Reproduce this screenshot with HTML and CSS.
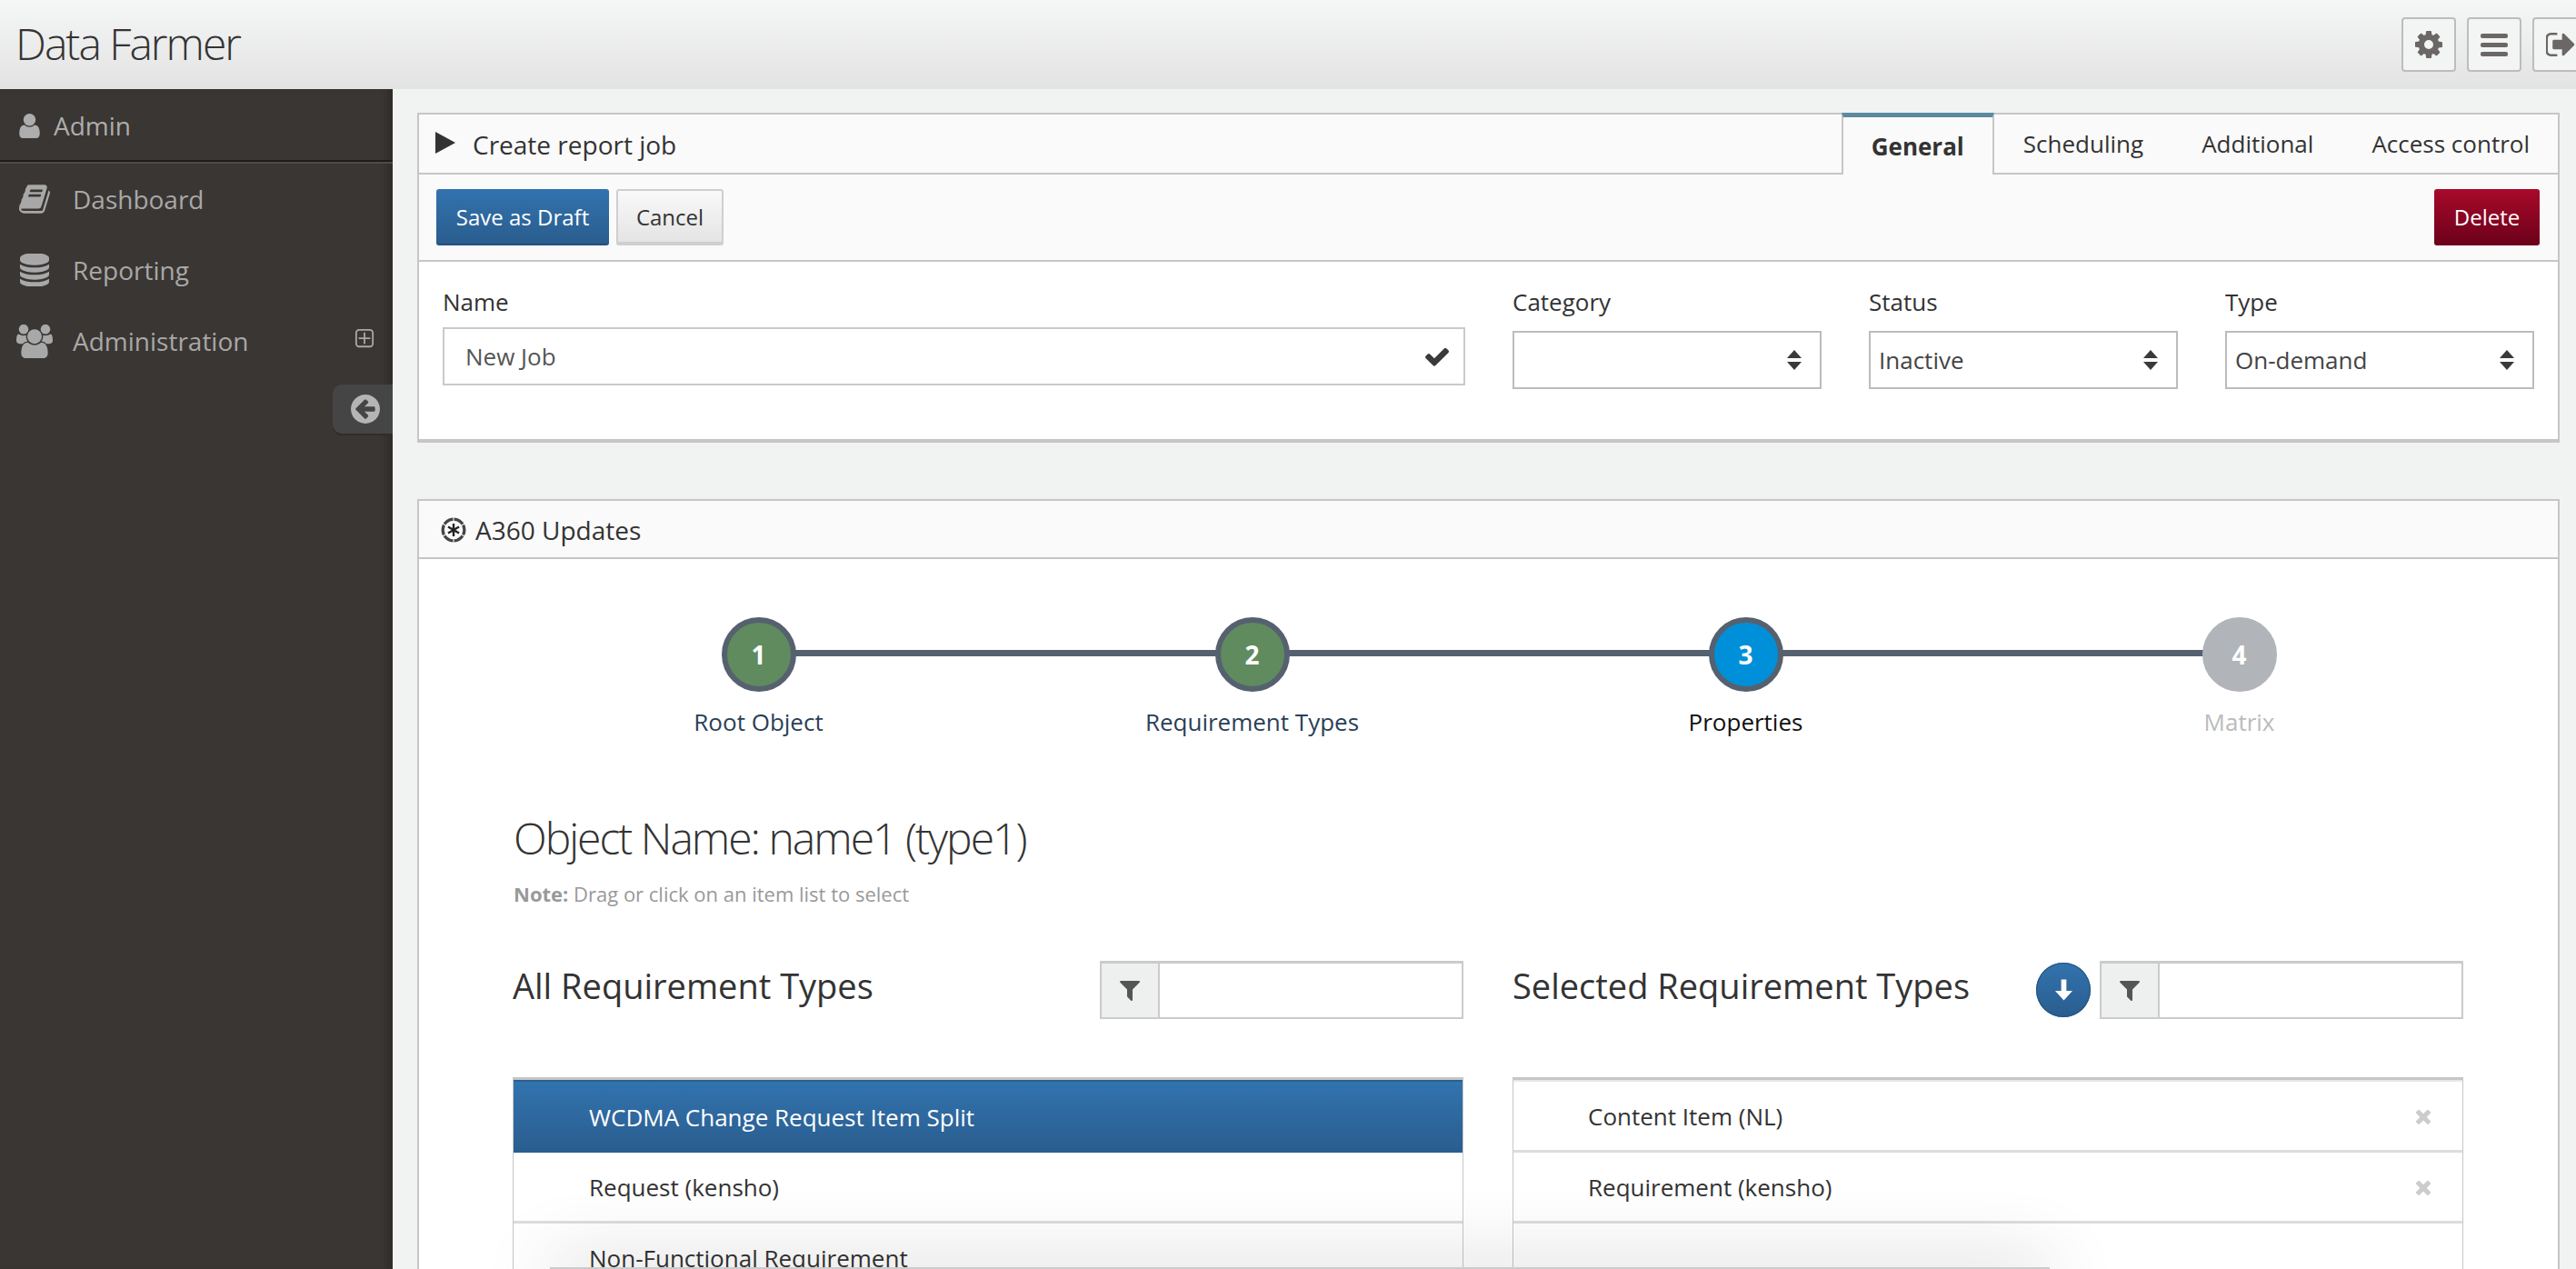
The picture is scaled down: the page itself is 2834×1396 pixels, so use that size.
FILE: index.html
```html
<!DOCTYPE html>
<html lang="en">
<head>
  <meta charset="UTF-8" />
  <title>Data Farmer</title>
  <link rel="stylesheet" href="styles.css">
</head>
<body>

  <svg class="sprite" xmlns="http://www.w3.org/2000/svg">
    <symbol id="i-user" viewBox="192 128 1408 1536"><path d="M1536 1399q0 109-62.500 187t-150.500 78h-854q-88 0-150.500-78t-62.500-187q0-85 8.500-160.500t31.500-152 58.500-131 94-89 134.500-34.500q131 128 313 128t313-128q76 0 134.500 34.500t94 89 58.500 131 31.500 152 8.500 160.500zm-256-887q0 159-112.500 271.500t-271.500 112.500-271.500-112.500-112.500-271.500 112.500-271.500 271.500-112.500 271.500 112.500 112.500 271.500z"/></symbol>
    <symbol id="i-book" viewBox="64 128 1664 1536"><path d="M1703 478q40 57 18 129l-275 906q-19 64-76.500 107.500t-122.500 43.500h-923q-77 0-148.500-53.500t-99.500-131.500q-24-67-2-127 0-4 3-27t4-37q1-8-3-21.500t-3-19.500q2-11 8-21t16.500-23.500 16.500-23.500q23-38 45-91.500t30-91.500q3-10 .5-30t-.5-28q3-11 17-28t17-23q21-36 42-92t25-90q1-9-2.500-32t.5-28q4-13 22-30.500t22-22.500q19-26 42.500-84.500t27.500-96.500q1-8-3-25.500t-2-26.500q2-8 9-18t18-23 17-21q8-12 16.500-30.500t15-35 16-36 19.500-32 26.500-23.500 36-11.500 47.500 5.500l-1 3q38-9 51-9h761q74 0 114 56t18 130l-274 906q-36 119-71.500 153.500t-128.500 34.500h-869q-27 0-38 15-11 16-1 43 24 70 144 70h923q29 0 56-15.500t35-41.500l300-987q7-22 5-57 38 15 59 43zm-1064 2q-4 13 2 22.500t20 9.500h608q13 0 25.500-9.500t16.500-22.500l21-64q4-13-2-22.500t-20-9.500h-608q-13 0-25.500 9.500t-16.500 22.500zm-83 256q-4 13 2 22.500t20 9.500h608q13 0 25.500-9.500t16.500-22.500l21-64q4-13-2-22.500t-20-9.500h-608q-13 0-25.500 9.500t-16.500 22.500z"/></symbol>
    <symbol id="i-database" viewBox="128 128 1536 1536"><path d="M896 768q237 0 443-43t325-127v170q0 69-103 128t-280 93.500-385 34.500-385-34.500-280-93.500-103-128v-170q119 84 325 127t443 43zm0 768q237 0 443-43t325-127v170q0 69-103 128t-280 93.500-385 34.500-385-34.500-280-93.500-103-128v-170q119 84 325 127t443 43zm0-384q237 0 443-43t325-127v170q0 69-103 128t-280 93.500-385 34.500-385-34.500-280-93.500-103-128v-170q119 84 325 127t443 43zm0-1152q208 0 385 34.500t280 93.500 103 128v128q0 69-103 128t-280 93.500-385 34.500-385-34.500-280-93.500-103-128v-128q0-69 103-128t280-93.500 385-34.500z"/></symbol>
    <symbol id="i-users" viewBox="0 128 1920 1536"><path d="M593 896q-162 5-265 128h-134q-82 0-138-40.500t-56-118.500q0-353 124-353 6 0 43.500 21t97.500 42.500 119 21.500q67 0 133-23-5 37-5 66 0 139 81 256zm1071 637q0 120-73 189.500t-194 69.500h-874q-121 0-194-69.500t-73-189.500q0-53 3.500-103.500t14-109 26.500-108.500 43-97.500 62-81 85.500-53.500 111.500-20q10 0 43 21.500t73 48 107 48 135 21.500 135-21.500 107-48 73-48 43-21.500q61 0 111.500 20t85.500 53.500 62 81 43 97.500 26.500 108.500 14 109 3.500 103.500zm-1024-1277q0 106-75 181t-181 75-181-75-75-181 75-181 181-75 181 75 75 181zm704 384q0 159-112.500 271.500t-271.500 112.500-271.500-112.500-112.500-271.500 112.500-271.500 271.500-112.500 271.500 112.500 112.500 271.500zm576 225q0 78-56 118.500t-138 40.500h-134q-103-123-265-128 81-117 81-256 0-29-5-66 66 23 133 23 59 0 119-21.500t97.500-42.500 43.500-21q124 0 124 353zm-128-609q0 106-75 181t-181 75-181-75-75-181 75-181 181-75 181 75 75 181z"/></symbol>
    <symbol id="i-plus-square" viewBox="192 128 1408 1536"><path d="M1344 800v64q0 14-9 23t-23 9h-352v352q0 14-9 23t-23 9h-64q-14 0-23-9t-9-23v-352h-352q-14 0-23-9t-9-23v-64q0-14 9-23t23-9h352v-352q0-14 9-23t23-9h64q14 0 23 9t9 23v352h352q14 0 23 9t9 23zm128 448v-832q0-66-47-113t-113-47h-832q-66 0-113 47t-47 113v832q0 66 47 113t113 47h832q66 0 113-47t47-113zm128-832v832q0 119-84.500 203.500t-203.500 84.500h-832q-119 0-203.500-84.500t-84.500-203.500v-832q0-119 84.500-203.500t203.500-84.500h832q119 0 203.500 84.500t84.500 203.500z"/></symbol>
    <symbol id="i-arrow-circle" viewBox="128 128 1536 1536"><path d="M1408 960v-128q0-26-19-45t-45-19h-502l189-189q19-19 19-45t-19-45l-91-91q-18-18-45-18t-45 18l-362 362-91 91q-18 18-18 45t18 45l91 91 362 362q18 18 45 18t45-18l91-91q18-18 18-45t-18-45l-189-189h502q26 0 45-19t19-45zm256-64q0 209-103 385.500t-279.500 279.500-385.500 103-385.500-103-279.500-279.500-103-385.500 103-385.500 279.500-279.500 385.500-103 385.500 103 279.500 279.500 103 385.500z"/></symbol>
    <symbol id="i-cog" viewBox="128 128 1536 1536"><path d="M1152 896q0-106-75-181t-181-75-181 75-75 181 75 181 181 75 181-75 75-181zm512-109v222q0 12-8 23t-20 13l-185 28q-19 54-39 91 35 50 107 138 10 12 10 25t-9 23q-27 37-99 108t-94 71q-12 0-26-9l-138-108q-44 23-91 38-16 136-29 186-7 28-36 28h-222q-14 0-24.500-8.500t-11.500-21.500l-28-184q-49-16-90-37l-141 107q-10 9-25 9-14 0-25-11-126-114-165-168-7-10-7-23 0-12 8-23 15-21 51-66.500t54-70.500q-27-50-41-99l-183-27q-13-2-21-12.500t-8-23.500v-222q0-12 8-23t19-13l186-28q14-46 39-92-40-57-107-138-10-12-10-24 0-10 9-23 26-36 98.500-107.500t94.500-71.500q13 0 26 10l138 107q44-23 91-38 16-136 29-186 7-28 36-28h222q14 0 24.500 8.500t11.500 21.500l28 184q49 16 90 37l142-107q9-9 24-9 13 0 25 10 129 119 165 170 7 8 7 22 0 12-8 23-15 21-51 66.500t-54 70.500q26 50 41 98l183 28q13 2 21 12.500t8 23.500z"/></symbol>
    <symbol id="i-sign-out" viewBox="128 256 1504 1280"><path d="M704 1440q0 4 1 20t.5 26.500-3 23.500-10 19.500-20.500 6.500h-320q-119 0-203.500-84.500t-84.500-203.500v-704q0-119 84.500-203.500t203.500-84.500h320q13 0 22.500 9.500t9.500 22.500q0 4 1 20t.5 26.500-3 23.500-10 19.500-20.500 6.500h-320q-66 0-113 47t-47 113v704q0 66 47 113t113 47h312l11.500 1 11.500 3 8 5.500 7 9 2 13.500zm928-544q0 26-19 45l-544 544q-19 19-45 19t-45-19-19-45v-288h-448q-26 0-45-19t-19-45v-384q0-26 19-45t45-19h448v-288q0-26 19-45t45-19 45 19l544 544q19 19 19 45z"/></symbol>
    <symbol id="i-check" viewBox="121 274 1550 1210"><path d="M1671 566q0 40-28 68l-724 724-136 136q-28 28-68 28t-68-28l-136-136-362-362q-28-28-28-68t28-68l136-136q28-28 68-28t68 28l294 295 656-657q28-28 68-28t68 28l136 136q28 28 28 68z"/></symbol>
    <symbol id="i-filter" viewBox="190 256 1410 1408"><path d="M1595 295q17 41-14 70l-493 493v742q0 42-39 59-13 5-25 5-27 0-45-19l-256-256q-19-19-19-45v-486l-493-493q-31-29-14-70 17-39 59-39h1280q42 0 59 39z"/></symbol>
    <symbol id="i-times" viewBox="300 238 1190 1316"><path d="M1490 1322q0 40-28 68l-136 136q-28 28-68 28t-68-28l-294-294-294 294q-28 28-68 28t-68-28l-136-136q-28-28-28-68t28-68l294-294-294-294q-28-28-28-68t28-68l136-136q28-28 68-28t68 28l294 294 294-294q28-28 68-28t68 28l136 136q28 28 28 68t-28 68l-294 294 294 294q28 28 28 68z"/></symbol>
    <symbol id="i-updown" viewBox="0 0 16 22"><path d="M8 0l8 9H0zM8 22L0 13h16z"/></symbol>
  </svg>

  <header class="topbar">
    <div class="brand">Data Farmer</div>
    <div class="top-actions">
      <button class="top-btn"><svg class="top-icon"><use href="#i-cog"/></svg></button>
      <button class="top-btn">
        <span class="bars"><span></span><span></span><span></span></span>
      </button>
      <button class="top-btn"><svg class="top-icon signout-icon"><use href="#i-sign-out"/></svg></button>
    </div>
  </header>

  <div class="layout">
    <aside class="sidebar">
      <div class="user-row">
        <svg class="user-icon"><use href="#i-user"/></svg>
        <span>Admin</span>
      </div>
      <ul class="menu">
        <li class="menu-item">
          <span class="menu-icon"><svg class="icon-book"><use href="#i-book"/></svg></span>
          <span>Dashboard</span>
        </li>
        <li class="menu-item">
          <span class="menu-icon"><svg class="icon-db"><use href="#i-database"/></svg></span>
          <span>Reporting</span>
        </li>
        <li class="menu-item">
          <span class="menu-icon"><svg class="icon-users"><use href="#i-users"/></svg></span>
          <span>Administration</span>
          <svg class="expand-icon"><use href="#i-plus-square"/></svg>
        </li>
      </ul>
      <div class="collapse-tab"><svg><use href="#i-arrow-circle"/></svg></div>
    </aside>

    <main class="content">
      <section class="panel job-panel">
        <div class="panel-head">
          <div class="panel-title">
            <span class="play"></span>
            <span>Create report job</span>
          </div>
          <nav class="tabs">
            <a class="tab active">General</a>
            <a class="tab">Scheduling</a>
            <a class="tab">Additional</a>
            <a class="tab">Access control</a>
          </nav>
        </div>
        <div class="toolbar">
          <button class="btn btn-primary">Save as Draft</button>
          <button class="btn btn-default">Cancel</button>
          <button class="btn btn-danger">Delete</button>
        </div>
        <div class="job-form">
          <div class="field field-name">
            <label>Name</label>
            <div class="name-input">
              <span>New Job</span>
              <svg class="check-icon"><use href="#i-check"/></svg>
            </div>
          </div>
          <div class="field">
            <label class="select-label">Category</label>
            <div class="select"><span></span><svg><use href="#i-updown"/></svg></div>
          </div>
          <div class="field">
            <label class="select-label">Status</label>
            <div class="select"><span>Inactive</span><svg><use href="#i-updown"/></svg></div>
          </div>
          <div class="field">
            <label class="select-label">Type</label>
            <div class="select"><span>On-demand</span><svg><use href="#i-updown"/></svg></div>
          </div>
        </div>
      </section>

      <section class="panel updates-panel">
        <div class="updates-head">
          <svg class="empire-icon" viewBox="0 0 26 26">
            <circle cx="13" cy="13" r="11" fill="none" stroke="#444" stroke-width="3"/>
            <path d="M13 0v5M13 21v5M1.700 6.500l4.300 2.500M20 17l4.300 2.500M1.700 19.500L6 17M20 9l4.300-2.500" stroke="#fafafa" stroke-width="1"/>
            <path d="M13 6.500v13M7.400 9.750l11.200 6.500M7.400 16.250l11.200-6.500" stroke="#222" stroke-width="2.200"/>
          </svg>
          <span>A360 Updates</span>
        </div>
        <div class="updates-body">
          <ol class="stepper">
            <li class="step done"><span class="step-circle">1</span><span class="step-label">Root Object</span></li>
            <li class="step done"><span class="step-circle">2</span><span class="step-label">Requirement Types</span></li>
            <li class="step current"><span class="step-circle">3</span><span class="step-label">Properties</span></li>
            <li class="step pending"><span class="step-circle">4</span><span class="step-label">Matrix</span></li>
          </ol>

          <h2 class="object-name">Object Name: name1 (type1)</h2>
          <p class="note"><strong>Note:</strong> Drag or click on an item list to select</p>

          <div class="columns">
            <div class="column">
              <div class="column-head">
                <h3>All Requirement Types</h3>
                <div class="filter">
                  <span class="filter-addon"><svg><use href="#i-filter"/></svg></span>
                </div>
              </div>
              <ul class="item-list">
                <li class="item selected">WCDMA Change Request Item Split</li>
                <li class="item">Request (kensho)</li>
                <li class="item">Non-Functional Requirement</li>
              </ul>
            </div>
            <div class="column">
              <div class="column-head">
                <h3>Selected Requirement Types</h3>
                <div class="head-tools">
                  <button class="round-btn">
                    <svg viewBox="0 0 20 24"><path d="M7 0h6v13h7L10 24 0 13h7z"/></svg>
                  </button>
                  <div class="filter">
                    <span class="filter-addon"><svg><use href="#i-filter"/></svg></span>
                  </div>
                </div>
              </div>
              <ul class="item-list">
                <li class="item"><span>Content Item (NL)</span><svg class="remove-icon"><use href="#i-times"/></svg></li>
                <li class="item"><span>Requirement (kensho)</span><svg class="remove-icon"><use href="#i-times"/></svg></li>
              </ul>
            </div>
          </div>
        </div>
      </section>
    </main>
  </div>

  <!-- shadow of another window that sits just below the screen -->
  <div class="window-shadow"></div>

</body>
</html>
```

FILE: styles.css
```css
* {
  box-sizing: border-box;
}

html, body {
  height: 100%;
}

body {
  margin: 0;
  font-family: 'Open Sans', sans-serif;
  font-size: 26px;
  color: #333;
  background-color: #f1f2f2;
  display: flex;
  flex-direction: column;
  overflow: hidden;
  position: relative;
}

ul, ol {
  list-style: none;
  margin: 0;
  padding: 0;
}

button {
  font-family: inherit;
  cursor: pointer;
}

svg {
  display: block;
  fill: currentColor;
}

.sprite {
  display: none;
}

/* top bar */
.topbar {
  flex: 0 0 98px;
  display: flex;
  align-items: center;
  justify-content: space-between;
  background: linear-gradient(#f5f6f6, #e3e3e3);
}

.brand {
  padding: 0 0 3px 17px;
  font-size: 48px;
  font-weight: 300;
  letter-spacing: -2px;
  color: #333;
}

.top-actions {
  display: flex;
  gap: 12px;
  margin-right: -12px;
  flex: none;
}

.top-btn {
  width: 60px;
  height: 60px;
  padding: 0;
  display: flex;
  align-items: center;
  justify-content: center;
  background-color: #f3f4f4;
  border: 2px solid #bdbdbd;
  border-radius: 4px;
  color: #6b6766;
}

.top-icon {
  width: 30px;
  height: 30px;
}

.signout-icon {
  width: 32px;
  height: 26px;
  margin-left: 2px;
}

.bars {
  display: flex;
  flex-direction: column;
  gap: 5px;
}

.bars span {
  display: block;
  width: 30px;
  height: 5px;
  border-radius: 2px;
  background-color: #6b6766;
}

.layout {
  flex: 1;
  display: flex;
  min-height: 0;
}

/* sidebar */
.sidebar {
  flex: 0 0 432px;
  display: flex;
  flex-direction: column;
  background-color: #3a3633;
  box-shadow: inset -10px 0 10px -6px rgba(0, 0, 0, 0.25);
  font-size: 28px;
  color: #a8a8a8;
}

.user-row {
  height: 82px;
  flex: none;
  display: flex;
  align-items: center;
  gap: 14px;
  padding: 0 0 0 20px;
  border-bottom: 2px solid #4d4a48;
  box-shadow: inset 0 -2px 0 #1f1d1b;
  color: #adadad;
}

.user-icon {
  width: 25px;
  height: 27px;
}

.menu-item {
  height: 78px;
  display: flex;
  align-items: center;
  padding-right: 20px;
}

.menu-icon {
  width: 80px;
  flex: none;
  display: flex;
  justify-content: center;
  padding-right: 4px;
}

.menu-icon + span {
  flex: 1;
}

.icon-book {
  width: 34px;
  height: 32px;
}

.icon-db {
  width: 32px;
  height: 36px;
}

.icon-users {
  width: 40px;
  height: 37px;
}

.expand-icon {
  width: 22px;
  height: 22px;
  margin-bottom: 4px;
}

.collapse-tab {
  align-self: flex-end;
  width: 66px;
  height: 54px;
  margin-top: 9px;
  display: flex;
  align-items: center;
  padding-left: 20px;
  background-color: #454545;
  border-radius: 10px 0 0 10px;
  box-shadow: 0 2px 0 #2f2c2a;
  color: #b5b5b5;
}

.collapse-tab svg {
  width: 32px;
  height: 32px;
}

/* main column */
.content {
  flex: 1;
  min-width: 0;
  padding: 26px 18px 0 27px;
}

.panel {
  background-color: #fff;
  border: 2px solid #c6c6c6;
}

.job-panel {
  height: 363px;
  border-bottom-width: 4px;
}

.panel-head {
  height: 66px;
  display: flex;
  justify-content: space-between;
  background-color: #fafafa;
  border-bottom: 2px solid #c6c6c6;
}

.panel-title {
  display: flex;
  align-items: center;
  gap: 19px;
  padding: 2px 0 0 18px;
  font-size: 28px;
}

.play {
  width: 0;
  height: 0;
  border-left: 22px solid #333;
  border-top: 12px solid transparent;
  border-bottom: 12px solid transparent;
  margin-bottom: 4px;
}

.tabs {
  display: flex;
}

.tab {
  padding: 0 32px;
  display: flex;
  align-items: center;
  height: 100%;
}

.tab:last-child {
  padding-right: 31px;
}

.tab.active {
  height: 68px;
  margin-top: -2px;
  padding: 0 31px;
  background-color: #fafafa;
  border: 2px solid #c6c6c6;
  border-top: 5px solid #5a8ba0;
  border-bottom: none;
  font-weight: 700;
}

.toolbar {
  height: 96px;
  display: flex;
  align-items: center;
  gap: 8px;
  padding: 0 20px 0 19px;
  background-color: #fafafa;
  border-bottom: 2px solid #c6c6c6;
}

.btn {
  height: 62px;
  padding: 0;
  font-size: 24px;
  white-space: nowrap;
  border-radius: 3px;
  border: none;
}

.btn-primary {
  width: 190px;
  color: #fff;
  font-weight: 500;
  background: linear-gradient(#3273ae, #2a5d8e);
  border-bottom: 2px solid #23527c;
}

.btn-default {
  width: 118px;
  color: #333;
  background: linear-gradient(#f9f9f9, #e4e4e4);
  border: 2px solid #cfcfcf;
  border-bottom-width: 4px;
}

.btn-danger {
  width: 116px;
  margin-left: auto;
  padding-bottom: 2px;
  color: #fff;
  font-weight: 500;
  background: linear-gradient(#a80a2a, #6b001a);
}

.job-form {
  display: flex;
  gap: 52px;
  padding: 26px 26px 0 26px;
}

.field {
  flex: 0 0 340px;
}

.field-name {
  flex: 1;
}

.field label {
  display: block;
  height: 36px;
  line-height: 36px;
  margin-bottom: 10px;
}

.field .select-label {
  margin-bottom: 14px;
}

.name-input {
  height: 64px;
  display: flex;
  align-items: center;
  justify-content: space-between;
  padding: 0 16px 0 23px;
  border: 2px solid #cacaca;
  color: #555;
}

.check-icon {
  width: 26px;
  height: 22px;
  color: #3a3a3a;
}

.select {
  height: 64px;
  display: flex;
  align-items: center;
  justify-content: space-between;
  padding: 0 20px 0 9px;
  border: 2px solid #bcbcbc;
  color: #444;
}

.select svg {
  width: 16px;
  height: 22px;
  color: #3a3a3a;
}

/* second panel */
.updates-panel {
  margin-top: 62px;
  min-height: 1000px;
}

.updates-head {
  height: 64px;
  display: flex;
  align-items: center;
  gap: 10px;
  padding: 2px 0 0 24px;
  background-color: #fafafa;
  border-bottom: 2px solid #c6c6c6;
  font-size: 28px;
}

.empire-icon {
  width: 28px;
  height: 28px;
}

.updates-body {
  padding: 64px 102px 0 103px;
}

.stepper {
  display: grid;
  grid-template-columns: repeat(4, 543px);
  margin-left: -1px;
}

.step {
  position: relative;
  display: flex;
  flex-direction: column;
  align-items: center;
}

/* line from this step to the next one */
.step:not(:last-child)::after {
  content: "";
  position: absolute;
  left: 50%;
  top: 36px;
  width: 100%;
  height: 7px;
  background-color: #56616f;
}

.step-circle {
  position: relative;
  z-index: 1;
  width: 82px;
  height: 82px;
  display: flex;
  align-items: center;
  justify-content: center;
  border: 6px solid #56616f;
  border-radius: 50%;
  font-size: 28px;
  font-weight: 700;
  color: #fff;
}

.step-label {
  margin-top: 15px;
  line-height: 36px;
}

.done .step-circle {
  background-color: #5f8b5f;
}

.done .step-label {
  color: #2a3f58;
}

.current .step-circle {
  background-color: #0090d9;
}

.current .step-label {
  color: #111;
}

.pending .step-circle {
  background-color: #b1b4b8;
  border-color: #b1b4b8;
}

.pending .step-label {
  color: #bbb;
}

.object-name {
  margin: 78px 0 0 1px;
  line-height: 64px;
  font-size: 48px;
  font-weight: 300;
  letter-spacing: -2px;
  color: #333;
}

.note {
  margin: 13px 0 0 1px;
  line-height: 32px;
  font-size: 22px;
  color: #999;
}

.columns {
  display: grid;
  grid-template-columns: 1046px 1046px;
  gap: 54px;
  margin-top: 58px;
}

.column-head {
  height: 64px;
  display: flex;
  justify-content: space-between;
  margin-bottom: 64px;
}

.column-head h3 {
  margin: 0;
  line-height: 54px;
  font-size: 38px;
  font-weight: 400;
  color: #333;
}

.head-tools {
  display: flex;
  align-items: center;
  gap: 10px;
}

.filter {
  width: 400px;
  height: 64px;
  background-color: #fff;
  border: 2px solid #cbcbcb;
  border-top-width: 3px;
}

.filter-addon {
  width: 64px;
  height: 100%;
  display: flex;
  align-items: center;
  justify-content: center;
  background-color: #eeefef;
  border-right: 2px solid #cbcbcb;
  color: #555;
}

.filter-addon svg {
  width: 22px;
  height: 22px;
}

.round-btn {
  width: 60px;
  height: 60px;
  padding: 0;
  display: flex;
  align-items: center;
  justify-content: center;
  border: none;
  border-radius: 50%;
  background: linear-gradient(#3273ae, #2a5d8e);
  box-shadow: inset 0 0 0 1px #23527c;
  color: #fff;
}

.round-btn svg {
  width: 19px;
  height: 24px;
}

.item-list {
  height: 300px;
  background-color: #fff;
  border: 1px solid #c6c6c6;
  border-top: 3px solid #c6c6c6;
}

.item {
  height: 78px;
  display: flex;
  align-items: center;
  justify-content: space-between;
  padding: 0 34px 0 82px;
  border-bottom: 3px solid #ddd;
}

.column:first-child .item {
  padding-left: 83px;
}

.item:first-child {
  height: 80px;
  border-top: 2px solid #e8e8e8;
}

.item.selected {
  color: #fff;
  background: linear-gradient(#3273ae, #2a5d8e);
  border-bottom: none;
  border-top-color: #2b5f90;
}

.remove-icon {
  width: 18px;
  height: 18px;
  color: #ccc;
}

.window-shadow {
  position: absolute;
  left: 605px;
  width: 1650px;
  top: 1394px;
  height: 20px;
  background-color: #ccc;
  box-shadow: 0 0 80px rgba(0, 0, 0, 0.3);
}
```
